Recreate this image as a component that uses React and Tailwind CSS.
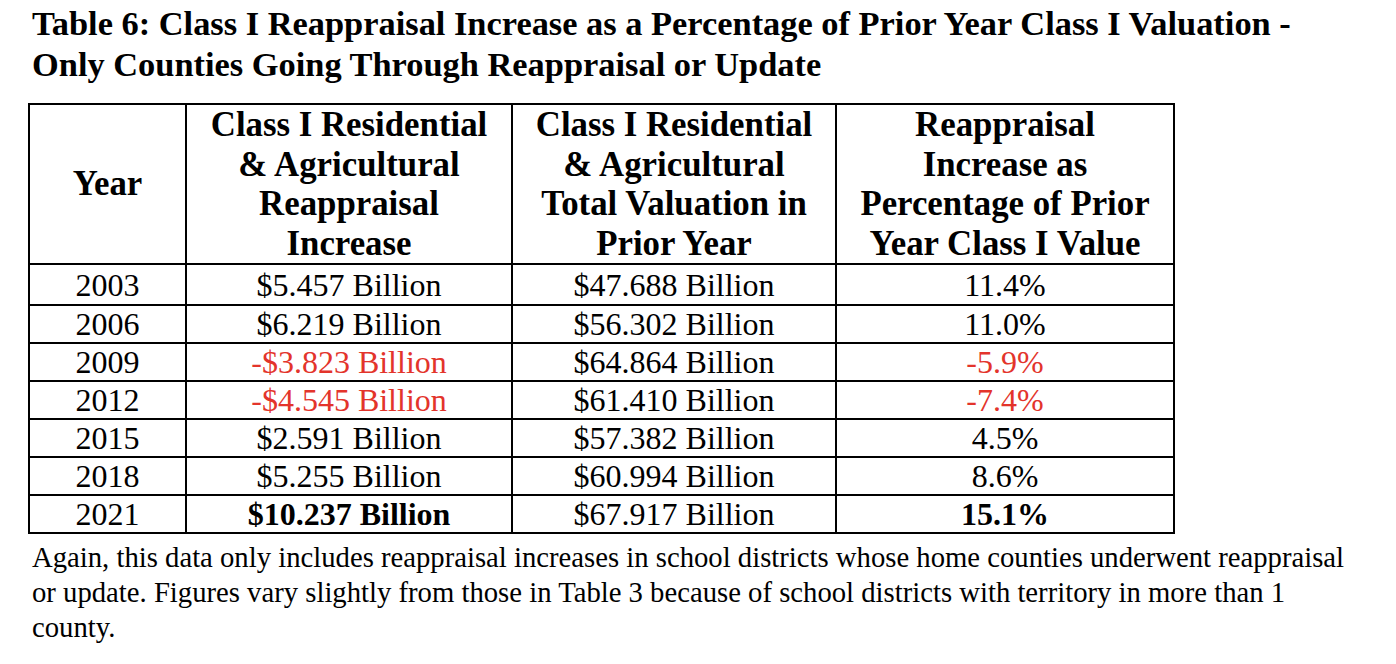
const rows = [
  { year: "2003", inc: "$5.457 Billion", total: "$47.688 Billion", pct: "11.4%", first: true },
  { year: "2006", inc: "$6.219 Billion", total: "$56.302 Billion", pct: "11.0%" },
  { year: "2009", inc: "-$3.823 Billion", total: "$64.864 Billion", pct: "-5.9%", neg: true },
  { year: "2012", inc: "-$4.545 Billion", total: "$61.410 Billion", pct: "-7.4%", neg: true },
  { year: "2015", inc: "$2.591 Billion", total: "$57.382 Billion", pct: "4.5%" },
  { year: "2018", inc: "$5.255 Billion", total: "$60.994 Billion", pct: "8.6%" },
  { year: "2021", inc: "$10.237 Billion", total: "$67.917 Billion", pct: "15.1%", bold: true },
];

export default function App() {
  return (
    <div className="bg-white min-h-[664px] w-[1396px] text-black font-['Liberation_Serif',serif]">
      <h1 className="pl-[32px] pt-[3px] text-[34.4px] leading-[41px] font-bold">
        Table 6: Class I Reappraisal Increase as a Percentage of Prior Year Class I Valuation -
        <br />
        Only Counties Going Through Reappraisal or Update
      </h1>

      <table className="ml-[28px] mt-[18px] border-collapse border-2 border-black text-[32px] table-fixed w-[1145px]">
        <colgroup>
          <col className="w-[157px]" />
          <col className="w-[326px]" />
          <col className="w-[324px]" />
          <col className="w-[338px]" />
        </colgroup>
        <thead>
          <tr className="font-bold text-[34.8px] leading-[39.5px]">
            <th className="border-2 border-black font-bold p-0 h-[157px]">Year</th>
            <th className="border-2 border-black font-bold p-0">
              Class I Residential<br />&amp; Agricultural<br />Reappraisal<br />Increase
            </th>
            <th className="border-2 border-black font-bold p-0">
              Class I Residential<br />&amp; Agricultural<br />Total Valuation in<br />Prior Year
            </th>
            <th className="border-2 border-black font-bold p-0">
              Reappraisal<br />Increase as<br />Percentage of Prior<br />Year Class I Value
            </th>
          </tr>
        </thead>
        <tbody>
          {rows.map((r) => (
            <tr key={r.year} className={`${r.first ? "h-[41px]" : "h-[38px]"} leading-[36px] text-center`}>
              <td className="border-2 border-black p-0">{r.year}</td>
              <td className={`border-2 border-black p-0 ${r.neg ? "text-[#e3342b]" : ""} ${r.bold ? "font-bold" : ""}`}>
                {r.inc}
              </td>
              <td className="border-2 border-black p-0">{r.total}</td>
              <td className={`border-2 border-black p-0 ${r.neg ? "text-[#e3342b]" : ""} ${r.bold ? "font-bold" : ""}`}>
                {r.pct}
              </td>
            </tr>
          ))}
        </tbody>
      </table>

      <p className="pl-[32px] mt-[6px] w-[1364px] text-[28.7px] leading-[35px]">
        Again, this data only includes reappraisal increases in school districts whose home counties underwent reappraisal
        or update. Figures vary slightly from those in Table 3 because of school districts with territory in more than 1
        county.
      </p>
    </div>
  );
}
